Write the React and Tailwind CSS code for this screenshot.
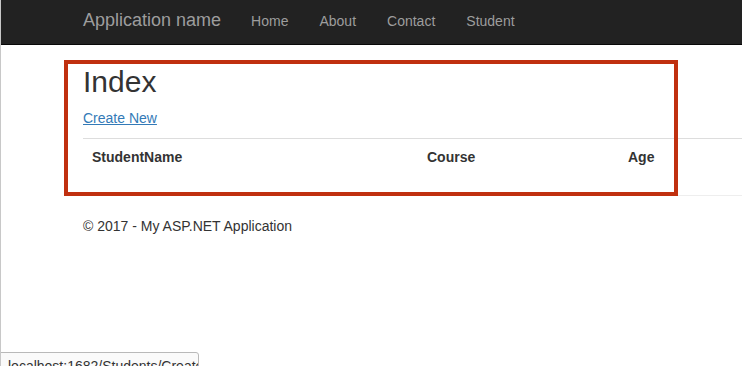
export default function App() {
  const columns = [
    { label: "StudentName", width: "w-[335px]" },
    { label: "Course", width: "w-[201px]" },
    { label: "Age", width: "flex-1" },
  ];

  return (
    <div className="relative min-h-[366px] h-[366px] overflow-hidden bg-white border-l border-[#c8c8c8] font-['Liberation_Sans',Arial,sans-serif] text-[14px] text-[#333]">
      {/* navbar */}
      <div className="h-[45px] bg-[#222] border-b border-[#080808] flex items-start pl-[82px]">
        <span className="text-[18px] leading-[20px] text-[#9d9d9d] mt-[10px]">
          Application name
        </span>
        <nav className="flex gap-[31px] ml-[30px] mt-[12px]">
          <a className="text-[#9d9d9d] leading-[18px]">Home</a>
          <a className="text-[#9d9d9d] leading-[18px]">About</a>
          <a className="text-[#9d9d9d] leading-[18px]">Contact</a>
          <a className="text-[#9d9d9d] leading-[18px]">Student</a>
        </nav>
      </div>

      {/* body */}
      <div className="pl-[82px]">
        <h2 className="text-[30px] leading-[33px] mt-[20px] mb-[10px] font-normal">
          Index
        </h2>
        <p className="leading-[20px] mb-[10px]">
          <a className="text-[#337ab7] underline">Create New</a>
        </p>
        <div className="flex border-t border-[#ddd] h-[38px] mb-[19px]">
          {columns.map((c) => (
            <div key={c.label} className={`${c.width} px-[9px] pt-[8px] font-bold leading-[20px]`}>
              {c.label}
            </div>
          ))}
        </div>
        <hr className="border-0 border-t border-[#eee]" />
        <footer className="mt-[20px] leading-[20px]">
          © 2017 - My ASP.NET Application
        </footer>
      </div>

      {/* annotation */}
      <div className="absolute left-[63px] top-[60px] w-[614px] h-[136px] border-[4px] border-[#c0300f]" />

      {/* status bubble */}
      <div className="absolute left-[-1px] top-[352px] w-[199px] h-[22px] bg-[#fafafa] border border-[#b9b9b9] rounded-tr-[3px] pl-[7px] pt-[5px] text-[14px] leading-[16px] text-[#333] whitespace-nowrap overflow-hidden">
        localhost:1682/Students/Create
      </div>
    </div>
  );
}
